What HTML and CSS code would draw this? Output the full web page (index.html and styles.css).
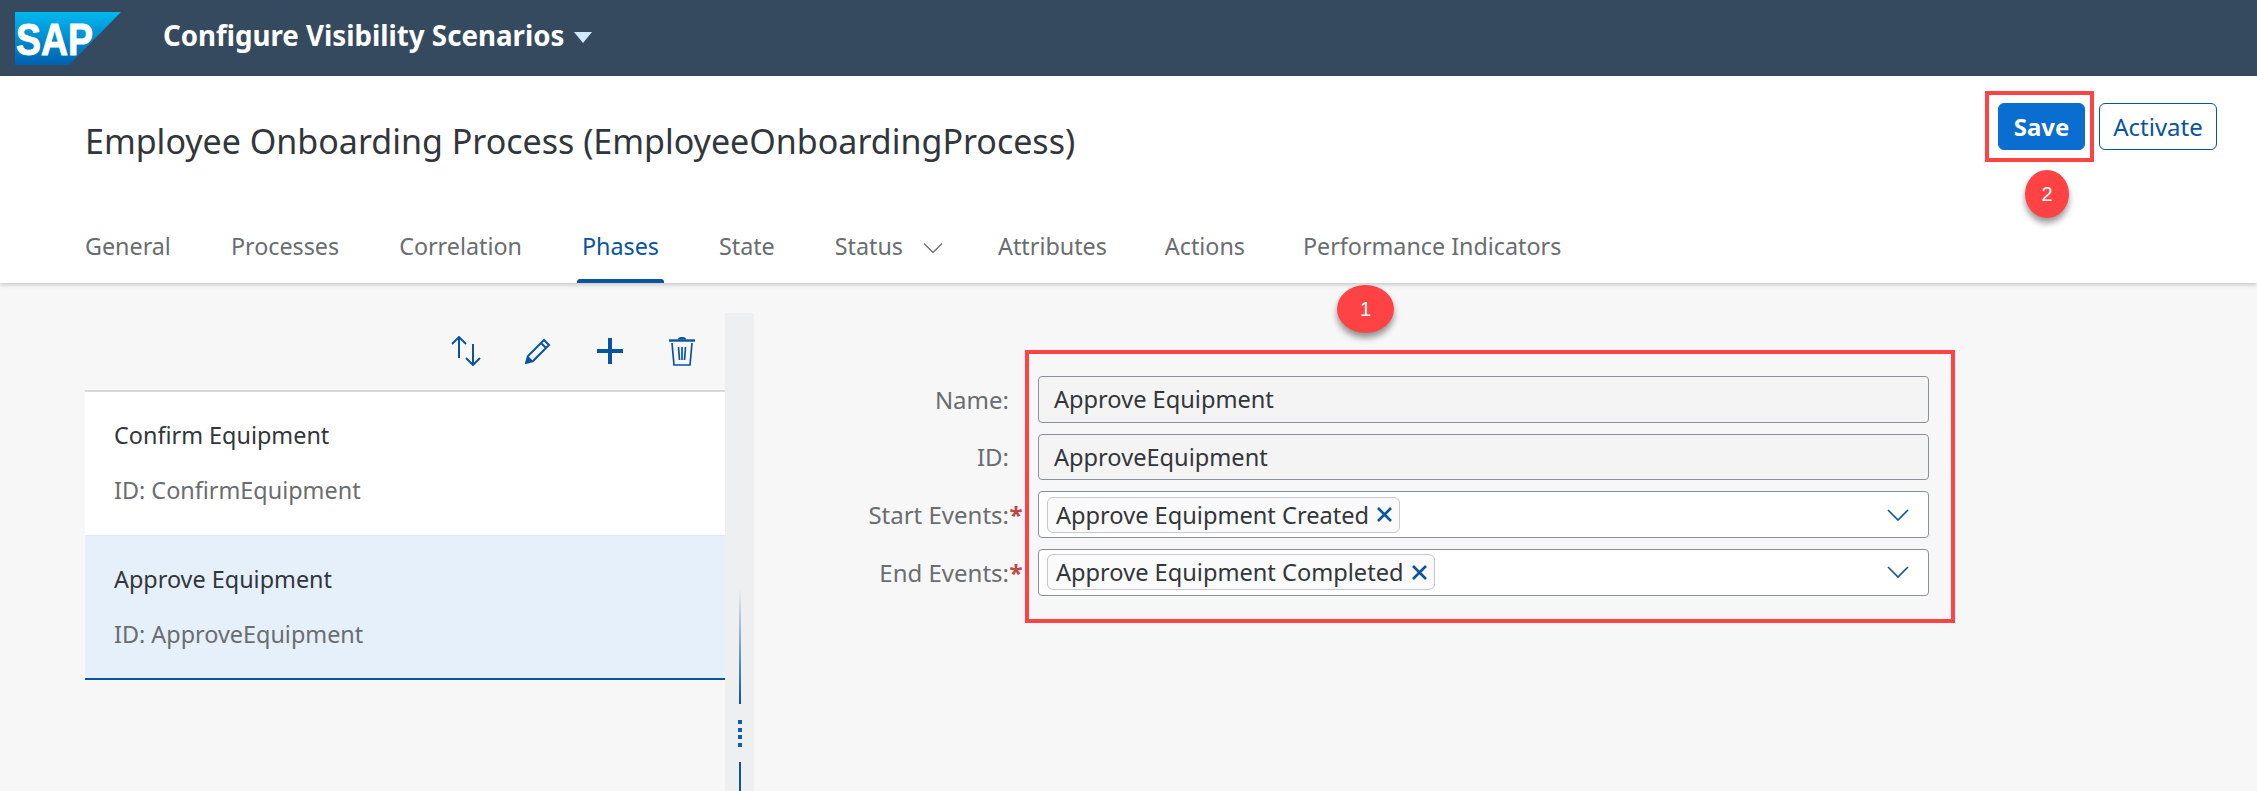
FILE: index.html

```html
<!DOCTYPE html>
<html lang="en">
<head>
<meta charset="utf-8"/>
<title>Configure Visibility Scenarios</title>
<link rel="stylesheet" href="styles.css">
</head>
<body>
<header class="shell">
  <svg class="logo" width="106" height="53" viewBox="0 0 106 53">
    <defs>
      <linearGradient id="logoFill" x1="0" y1="0" x2="0" y2="1">
        <stop offset="0" stop-color="#00b8f1"/>
        <stop offset="1" stop-color="#0060ae"/>
      </linearGradient>
    </defs>
    <polygon points="0,0 106,0 54,53 0,53" fill="url(#logoFill)"/>
    <text class="logo-text" x="1" y="43" textLength="77" lengthAdjust="spacingAndGlyphs">SAP</text>
  </svg>
  <div class="shell-title">Configure Visibility Scenarios</div>
  <span class="shell-caret"></span>
</header>

<section class="object-header">
  <div class="title-row">
    <h1>Employee Onboarding Process (EmployeeOnboardingProcess)</h1>
    <div class="actions">
      <button class="btn btn-primary">Save</button>
      <button class="btn btn-ghost">Activate</button>
      <span class="mark mark-save"></span>
      <span class="badge badge-two">2</span>
    </div>
  </div>
  <nav class="tabs">
    <a>General</a>
    <a>Processes</a>
    <a>Correlation</a>
    <a class="active">Phases</a>
    <a>State</a>
    <a class="has-menu">Status
      <svg width="20" height="10" viewBox="0 0 20 10"><path d="M1 0.5 L10 9.5 L19 0.5" fill="none" stroke="#6a6d70" stroke-width="1.3"/></svg>
    </a>
    <a class="tight">Attributes</a>
    <a class="tight">Actions</a>
    <a>Performance Indicators</a>
  </nav>
</section>

<main class="content">
  <aside class="phases">
    <div class="toolbar">
      <svg class="tool-sort" width="30" height="30" viewBox="0 0 30 30">
        <path d="M8 22 V1 M1 8 L8 1 L15 8 M22 8 V29 M15 22 L22 29 L29 22" fill="none" stroke="#0854a0" stroke-width="2"/>
      </svg>
      <svg width="26" height="26" viewBox="0 0 26 26">
        <path d="M1 25 L3 18 L19 2 L24 7 L8 23 Z M16 5 L21 10" fill="none" stroke="#0854a0" stroke-width="2"/>
        <path d="M1 25 L3 18 L8 23 Z" fill="#0854a0"/>
      </svg>
      <svg width="26" height="26" viewBox="0 0 26 26">
        <path d="M13 0 V26 M0 13 H26" fill="none" stroke="#0854a0" stroke-width="4"/>
      </svg>
      <svg width="26" height="30" viewBox="0 0 26 30">
        <path d="M0 4.5 H26" stroke="#0854a0" stroke-width="2.4"/>
        <path d="M9 3.5 Q9 1 12 1 H14 Q17 1 17 3.5 Z" fill="#0854a0"/>
        <path d="M3 7 L5 29 H21 L23 7 M9.5 11 L10.5 24 M13 11 V24 M16.5 11 L15.5 24" fill="none" stroke="#0854a0" stroke-width="1.7"/>
      </svg>
    </div>
    <div class="phase">
      <div class="phase-name">Confirm Equipment</div>
      <div class="phase-id">ID: ConfirmEquipment</div>
    </div>
    <div class="phase selected">
      <div class="phase-name">Approve Equipment</div>
      <div class="phase-id">ID: ApproveEquipment</div>
    </div>
  </aside>

  <div class="splitter">
    <span class="grip-line fade"></span>
    <span class="grip-dots"><i></i><i></i><i></i><i></i></span>
    <span class="grip-line"></span>
  </div>

  <div class="detail">
    <div class="labels">
      <label>Name:</label>
      <label>ID:</label>
      <label>Start Events:<b>*</b></label>
      <label>End Events:<b>*</b></label>
    </div>
    <div class="fields">
      <span class="badge badge-one">1</span>
      <div class="field readonly">Approve Equipment</div>
      <div class="field readonly">ApproveEquipment</div>
      <div class="field combo">
        <span class="chip">Approve Equipment Created
          <svg width="15" height="15" viewBox="0 0 15 15"><path d="M1 1 L14 14 M14 1 L1 14" stroke="#0854a0" stroke-width="2.6"/></svg>
        </span>
        <svg class="chevron" width="22" height="12" viewBox="0 0 22 12"><path d="M1 1 L11 11 L21 1" fill="none" stroke="#0854a0" stroke-width="1.6"/></svg>
      </div>
      <div class="field combo">
        <span class="chip">Approve Equipment Completed
          <svg width="15" height="15" viewBox="0 0 15 15"><path d="M1 1 L14 14 M14 1 L1 14" stroke="#0854a0" stroke-width="2.6"/></svg>
        </span>
        <svg class="chevron" width="22" height="12" viewBox="0 0 22 12"><path d="M1 1 L11 11 L21 1" fill="none" stroke="#0854a0" stroke-width="1.6"/></svg>
      </div>
    </div>
  </div>
</main>
</body>
</html>
```

FILE: styles.css

```css
* {
  box-sizing: border-box;
}
body {
  margin: 0;
  height: 791px;
  overflow: hidden;
  display: flex;
  flex-direction: column;
  background-color: #f7f7f7;
  font-family: "Noto Sans", Arial, sans-serif;
  color: #32363a;
}

/* shell bar */
.shell {
  height: 76px;
  flex: none;
  display: flex;
  align-items: center;
  padding-left: 15px;
  background-color: #354a5f;
}
.logo {
  margin-top: 1px;
}
.logo-text {
  font-family: "Liberation Sans", Arial, sans-serif;
  font-weight: bold;
  font-size: 45px;
  fill: #ffffff;
  stroke: #ffffff;
  stroke-width: 1px;
}
.shell-title {
  margin: -6px 0 0 42px;
  font-size: 27.7px;
  font-weight: 700;
  color: #ffffff;
}
.shell-caret {
  margin: -2px 0 0 10px;
  border-left: 9px solid transparent;
  border-right: 9px solid transparent;
  border-top: 11px solid #d1e8ff;
}

/* object header */
.object-header {
  height: 207px;
  flex: none;
  background-color: #ffffff;
  box-shadow: 0 2px 4px rgba(0, 0, 0, 0.18);
  position: relative;
  z-index: 2;
}
.title-row {
  height: 131px;
  padding: 27px 40px 0 85px;
  display: flex;
  justify-content: space-between;
  align-items: flex-start;
}
h1 {
  margin: 15px 0 0;
  font-size: 34px;
  line-height: 46px;
  font-weight: 400;
}
.actions {
  position: relative;
  display: flex;
  gap: 14px;
}
.btn {
  height: 47px;
  border-radius: 6px;
  font-family: inherit;
  font-size: 24px;
  padding: 0;
}
.btn-primary {
  width: 87px;
  border: 1px solid #0a6ed1;
  background-color: #0a6ed1;
  color: #ffffff;
  font-weight: 700;
}
.btn-ghost {
  width: 118px;
  border: 1px solid #0854a0;
  background-color: #ffffff;
  color: #0854a0;
}
.mark-save {
  position: absolute;
  left: -13px;
  top: -12px;
  width: 109px;
  height: 71px;
  border: 4px solid #ff4345;
}
.badge {
  position: absolute;
  height: 48px;
  border-radius: 50%;
  background-color: #ff4345;
  color: #ffffff;
  font-family: "Liberation Sans", Arial, sans-serif;
  font-size: 20px;
  display: flex;
  align-items: center;
  justify-content: center;
  box-shadow: 0 5px 6px rgba(0, 0, 0, 0.4);
}
.badge-two {
  left: 27px;
  top: 67px;
  width: 44px;
}
.badge-one {
  left: 308px;
  top: -69px;
  width: 57px;
}
.tabs {
  height: 76px;
  padding: 0 0 0 85px;
  display: flex;
  gap: 60px;
  font-size: 23.3px;
  color: #6a6d70;
}
.tabs a {
  position: relative;
  height: 76px;
  padding-top: 23px;
  white-space: nowrap;
}
.tabs a.active {
  color: #0854a0;
}
.tabs a.active::after {
  content: "";
  position: absolute;
  left: -5px;
  right: -5px;
  bottom: 0;
  height: 4px;
  border-radius: 3px 3px 0 0;
  background-color: #0854a0;
}
.has-menu {
  margin-right: -5px;
}
.has-menu svg {
  margin-left: 14px;
  vertical-align: 2px;
}
.tabs a.tight {
  margin-right: -2px;
}

/* body */
.content {
  flex: 1;
  display: flex;
  min-height: 0;
}
.phases {
  margin-left: 85px;
  width: 640px;
  flex: none;
}
.toolbar {
  height: 109px;
  padding: 54px 30px 0 0;
  display: flex;
  justify-content: flex-end;
  align-items: flex-start;
  gap: 46px;
  border-bottom: 2px solid #d9d9d9;
}
.toolbar svg {
  align-self: center;
  margin-top: -25px;
}
.tool-sort {
  margin-right: -2px;
}
.phase {
  height: 144px;
  padding: 27px 30px 0 29px;
  background-color: #ffffff;
  border-bottom: 1px solid #e5e5e5;
  font-size: 23.4px;
}
.phase.selected {
  background-color: #e5f0fa;
  border-bottom: 2px solid #0854a0;
}
.phase-name {
  line-height: 32px;
}
.phase-id {
  margin-top: 23px;
  line-height: 32px;
  color: #6a6d70;
}
.splitter {
  width: 29px;
  flex: none;
  margin-top: 30px;
  background-color: #eeeff1;
  display: flex;
  flex-direction: column;
  align-items: center;
  padding-top: 275px;
}
.grip-line {
  width: 2px;
  flex: 1;
  background-color: #0854a0;
}
.grip-line.fade {
  flex: none;
  height: 116px;
  background: linear-gradient(to bottom, rgba(8, 84, 160, 0), #0854a0);
}
.grip-dots {
  margin: 16px 0 15px;
  display: flex;
  flex-direction: column;
  gap: 3.5px;
}
.grip-dots i {
  display: block;
  width: 4px;
  height: 4px;
  background-color: #0a5fb4;
}

/* form */
.detail {
  display: flex;
  align-items: flex-start;
  margin-top: 67px;
}
.labels {
  width: 271px;
  padding-top: 26px;
  display: grid;
  grid-auto-rows: 46.67px;
  row-gap: 11px;
  font-size: 24px;
  color: #6a6d70;
}
.labels label {
  display: flex;
  align-items: center;
  justify-content: flex-end;
  padding-right: 16px;
}
.labels b {
  margin-right: -14px;
  width: 14px;
  text-align: center;
  color: #c14646;
}
.fields {
  position: relative;
  width: 930px;
  padding: 22px 22px 23px 9px;
  border: 4px solid #ff4345;
  display: grid;
  grid-auto-rows: 46.67px;
  row-gap: 11px;
  font-size: 23.6px;
}
.field {
  display: flex;
  align-items: center;
  border: 1px solid #89919a;
  border-radius: 4px;
  padding: 0 15px;
}
.readonly {
  background-color: #f4f4f4;
}
.combo {
  background-color: #ffffff;
  justify-content: space-between;
  padding: 0 19px 0 8px;
}
.chip {
  height: 36px;
  padding: 0 7px 0 8px;
  display: flex;
  align-items: center;
  gap: 8px;
  border: 1px solid #c6c9cc;
  border-radius: 6px;
  background-color: #fafafa;
}
```
